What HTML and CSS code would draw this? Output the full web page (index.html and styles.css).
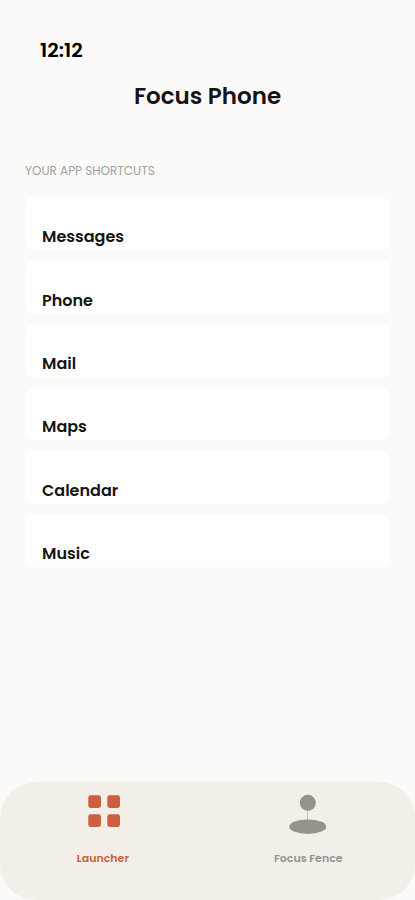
FILE: index.html
```html
<!DOCTYPE html>
<html lang="en">
<head>
<meta charset="utf-8">
<meta name="viewport" content="width=device-width, initial-scale=1">
<title>Focus Phone</title>
<link rel="stylesheet" href="styles.css">
</head>
<body>
<div class="screen">
  <header class="header">
    <time class="clock">12:12</time>
    <h1 class="title">Focus Phone</h1>
  </header>
  <main class="content">
    <h2 class="section-title">YOUR APP SHORTCUTS</h2>
    <ul class="shortcuts">
      <li><button class="shortcut" type="button">Messages</button></li>
      <li><button class="shortcut" type="button">Phone</button></li>
      <li><button class="shortcut" type="button">Mail</button></li>
      <li><button class="shortcut" type="button">Maps</button></li>
      <li><button class="shortcut" type="button">Calendar</button></li>
      <li><button class="shortcut" type="button">Music</button></li>
    </ul>
  </main>
  <nav class="tabs">
    <a class="tab tab-active" href="#launcher">
      <svg class="tab-icon" viewBox="0 0 40 40" fill="currentColor" aria-hidden="true">
        <rect x="5.3" y="3.3" width="12.7" height="12.7" rx="2.4"/>
        <rect x="24.3" y="3.3" width="12.7" height="12.7" rx="2.4"/>
        <rect x="5.3" y="22.3" width="12.7" height="12.7" rx="2.4"/>
        <rect x="24.3" y="22.3" width="12.7" height="12.7" rx="2.4"/>
      </svg>
      <span>Launcher</span>
    </a>
    <a class="tab" href="#fence">
      <svg class="tab-icon" viewBox="0 0 40 40" fill="currentColor" aria-hidden="true">
        <path d="M19.5 18v11" stroke="currentColor" stroke-width=".8" stroke-opacity=".6"/>
        <circle cx="19.8" cy="10.8" r="8"/>
        <ellipse cx="19.8" cy="34.7" rx="18.5" ry="7.2"/>
      </svg>
      <span>Focus Fence</span>
    </a>
  </nav>
</div>
</body>
</html>
```
FILE: styles.css
```css
* { box-sizing: border-box; }
body {
  margin: 0;
  background: #fbfaf8;
  color: #141414;
  font-family: Poppins, Inter, "Open Sans", sans-serif;
}
.screen { display: flex; flex-direction: column; min-height: 100vh; }
.header { padding-top: 36px; }
.clock { display: block; padding-left: 40px; font-size: 20px; line-height: 28px; font-weight: 600; color: #000; }
.title { margin: 14px 0 0; font-size: 23px; line-height: 36px; font-weight: 600; text-align: center; }
.content { flex: 1; padding: 47px 25px 24px; }
.section-title { margin: 0 0 16px; font-size: 12px; line-height: 20px; font-weight: 400; color: #a3a19d; }
.shortcuts { display: grid; grid-auto-rows: 1fr; gap: 10px; min-height: 370px; margin: 0; padding: 0; list-style: none; }
.shortcut {
  display: flex;
  align-items: flex-end;
  width: 100%;
  height: 100%;
  padding: 24px 17px 0;
  border: 0;
  border-radius: 8px;
  background: #fff;
  color: inherit;
  font: 600 16px/26px Poppins, Inter, "Open Sans", sans-serif;
}
.tabs { display: flex; min-height: 118px; padding-right: 4px; border-radius: 36px; background: #f3eee8; }
.tab { flex: 1; display: flex; flex-direction: column; align-items: center; gap: 17px; padding-top: 10px; color: #96928c; font-size: 11px; line-height: 18px; font-weight: 600; text-decoration: none; }
.tab-active { color: #ca6040; }
.tab-icon { width: 40px; height: 40px; overflow: visible; }
```
